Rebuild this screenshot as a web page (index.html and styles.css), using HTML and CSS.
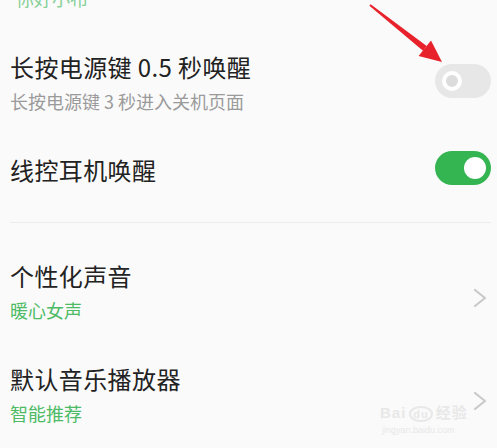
FILE: index.html
```html
<!DOCTYPE html>
<html lang="zh-CN">
<head>
    <meta charset="UTF-8">
    <meta name="viewport" content="width=device-width, initial-scale=1.0">
    <title>语音唤醒设置</title>
    <link rel="stylesheet" href="styles.css">
</head>
<body>
    <div class="pagina">
        <!-- Fila cortada arriba -->
        <div class="item item-top">
            <div class="sub verde">你好小布</div>
        </div>

        <div class="item">
            <div class="textos">
                <div class="titulo">长按电源键 0.5 秒唤醒</div>
                <div class="sub">长按电源键 3 秒进入关机页面</div>
            </div>
            <span class="switch"><span class="knob"></span></span>
        </div>

        <div class="item">
            <div class="textos">
                <div class="titulo">线控耳机唤醒</div>
            </div>
            <span class="switch on"><span class="knob"></span></span>
        </div>

        <div class="divisor"></div>

        <div class="item">
            <div class="textos">
                <div class="titulo">个性化声音</div>
                <div class="sub verde">暖心女声</div>
            </div>
            <svg class="chevron" width="14" height="20" viewBox="0 0 14 20">
                <polyline points="2,2 12,10 2,18" fill="none" stroke="#c9c9c9" stroke-width="2.2" stroke-linecap="round" stroke-linejoin="round"/>
            </svg>
        </div>

        <div class="item">
            <div class="textos">
                <div class="titulo">默认音乐播放器</div>
                <div class="sub verde">智能推荐</div>
            </div>
            <svg class="chevron" width="14" height="20" viewBox="0 0 14 20">
                <polyline points="2,2 12,10 2,18" fill="none" stroke="#c9c9c9" stroke-width="2.2" stroke-linecap="round" stroke-linejoin="round"/>
            </svg>
        </div>
    </div>

    <!-- Flecha roja de anotación -->
    <svg class="flecha" width="90" height="70" viewBox="0 0 90 70">
        <polygon points="9.4,5.8 10.6,4.2 66.7,45.9 63,50.7" fill="#e8222a"/>
        <polygon points="82,62 71,40.5 58.6,56.1" fill="#e8222a"/>
    </svg>

    <!-- Marca de agua -->
    <div class="marca">
        <div class="marca-logo">Bai<span class="marca-du">du</span>经验</div>
        <div class="marca-url">jingyan.baidu.com</div>
    </div>
</body>
</html>
```

FILE: styles.css
```css
/* Estilos generales */
body {
    margin: 0;
    background-color: #fafafa;
    font-family: "Noto Sans CJK SC", "Noto Sans", sans-serif;
    overflow: hidden;
    height: 448px;
}

.pagina {
    padding: 0 6px 0 10px;
}

/* Filas de ajustes */
.item {
    display: flex;
    align-items: center;
    justify-content: space-between;
    padding: 20px 0;
}

.item-top {
    margin-top: -35px;
}

.textos {
    display: flex;
    flex-direction: column;
    gap: 5px;
}

.titulo {
    font-size: 24px;
    line-height: 32px;
    color: #222;
    letter-spacing: 0.4px;
}

.sub {
    font-size: 18px;
    line-height: 26px;
    color: #9a9a9a;
}

.verde {
    color: #4dbb66;
}

.item-top .verde {
    color: #86d096;
    padding-left: 6px;
}

.divisor {
    height: 1px;
    background-color: #ececec;
    margin: 16px 0 17px;
}

/* Interruptores */
.switch {
    width: 56px;
    height: 34px;
    border-radius: 17px;
    background-color: #e7e7e7;
    display: flex;
    align-items: center;
    padding-left: 7px;
    box-sizing: border-box;
    margin-top: -4px;
}

.switch .knob {
    width: 12px;
    height: 12px;
    border-radius: 50%;
    border: 4px solid #fff;
    background-color: #dcdcdc;
}

.switch.on {
    background-color: #35b552;
    justify-content: flex-end;
    padding-left: 0;
    padding-right: 5px;
}

.switch.on .knob {
    width: 22px;
    height: 22px;
    border: none;
    background-color: #fff;
}

.chevron {
    margin-right: 4px;
    margin-top: 12px;
}

/* Flecha de anotación */
.flecha {
    position: absolute;
    left: 360px;
    top: 0;
}

/* Marca de agua de Baidu */
.marca {
    position: absolute;
    left: 380px;
    top: 403px;
    color: #e8e8e8;
    font-family: "Liberation Sans", "Noto Sans CJK SC", sans-serif;
}

.marca-logo {
    font-size: 15px;
    font-weight: bold;
    line-height: 20px;
    letter-spacing: 1px;
}

.marca-du {
    font-size: 11px;
    border: 2px solid #e8e8e8;
    border-radius: 50%;
    padding: 0 2px;
    margin: 0 3px;
}

.marca-url {
    font-size: 9px;
    line-height: 12px;
    padding-left: 2px;
}
```
